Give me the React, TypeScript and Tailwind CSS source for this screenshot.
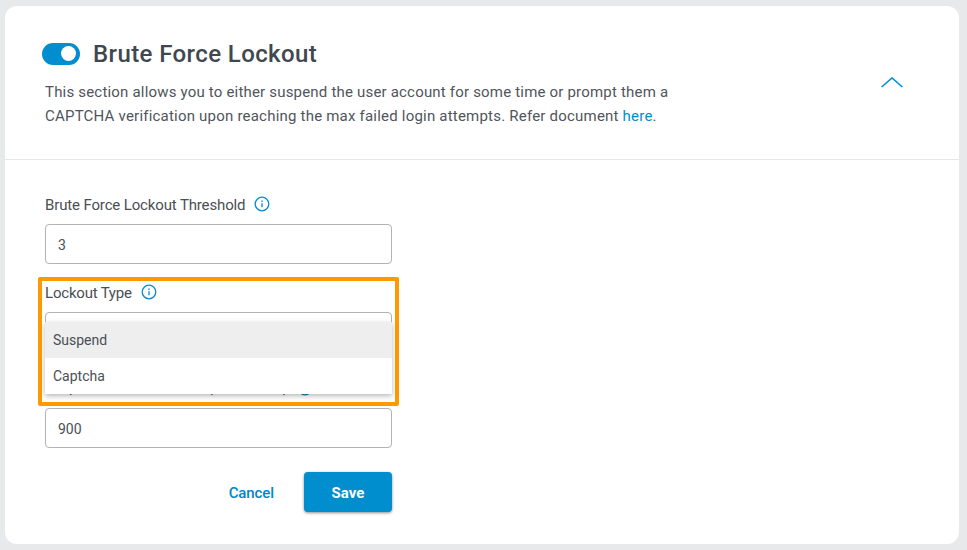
import type { ReactNode } from "react";

function InfoIcon() {
  return (
    <svg width="16" height="16" viewBox="0 0 16 16" fill="none" className="shrink-0">
      <circle cx="8" cy="8" r="6.8" stroke="#008ecf" strokeWidth="1.3" />
      <path d="M8 7.2v4M8 4.6v1.3" stroke="#008ecf" strokeWidth="1.3" />
    </svg>
  );
}

function Label({ children, className, iconClass = "pt-px" }: { children: ReactNode; className: string; iconClass?: string }) {
  return (
    <div className="flex h-5 items-start gap-[9px]">
      <span className={`whitespace-nowrap text-[15px] ${className}`}>{children}</span>
      <span className={iconClass}><InfoIcon /></span>
    </div>
  );
}

function Field({ value }: { value: string }) {
  return (
    <div className="flex h-10 w-[347px] items-center rounded-[4px] border border-[#b3b3b3] bg-white px-3 pt-px text-sm text-[#4a4f55]">
      {value}
    </div>
  );
}

export default function App() {
  return (
    <div className="h-[550px] w-[967px] bg-[#e8e9eb] pl-[5px] pt-1.5 font-['Roboto',sans-serif] text-[#4a4f55]">
      <section className="h-[538px] w-[954px] rounded-xl bg-white">
        <header className="flex h-[154px] items-center justify-between border-b border-[#e6e7e9] pl-[37px] pr-14">
          <div className="h-[120px] pt-[15px]">
            <div className="flex h-8 items-center gap-[13px]">
              <div className="flex h-[22px] w-[38px] items-center justify-end rounded-full bg-[#008ecf] pr-1">
                <div className="size-[15px] rounded-full bg-white" />
              </div>
              <h1 className="whitespace-nowrap text-2xl font-medium tracking-[0.4px] text-[#40474f]">Brute Force Lockout</h1>
            </div>
            <p className="mt-[10px] whitespace-nowrap pl-[3px] text-[15px] leading-6 text-[#50555b]">
              <span className="block tracking-[0.19px]">This section allows you to either suspend the user account for some time or prompt them a</span>
              <span className="block tracking-[0.21px]">
                CAPTCHA verification upon reaching the max failed login attempts. Refer document <a className="text-[#008ecf]">here</a>.
              </span>
            </p>
          </div>
          <svg width="22" height="11" viewBox="0 0 22 11" fill="none">
            <path d="M.6 10 11 1l10.400 9" stroke="#008ecf" strokeWidth="1.6" />
          </svg>
        </header>
        <div className="w-[387px] pl-10 pt-[35px]">
          <Label className="leading-5 tracking-[-0.14px]">Brute Force Lockout Threshold</Label>
          <div className="pt-[9px]"><Field value="3" /></div>
          <div className="relative mt-[19px]">
            <Label className="leading-5 tracking-[-0.2px]">Lockout Type</Label>
            <div className="pt-[9px]"><Field value="" /></div>
            <div className="absolute -left-[7px] -top-[6px] h-[129px] w-[361px] rounded-[2px] border-4 border-[#ff9900]" />
            <ul className="absolute left-0 top-[39px] z-10 w-[347px] bg-white text-sm shadow-[0_2px_5px_rgba(0,0,0,0.28)]">
              <li className="flex h-9 items-center bg-[#eeeeee] px-2">Suspend</li>
              <li className="flex h-9 items-center px-2">Captcha</li>
            </ul>
          </div>
          <div className="mt-[26px]">
            <Label className="leading-[18px] tracking-[-0.31px]" iconClass="pt-0.5">Suspend Effective Period (in Seconds)</Label>
            <div className="pt-[10px]"><Field value="900" /></div>
          </div>
          <div className="mt-6 flex justify-end gap-[30px]">
            <button className="h-10 pt-0.5 text-[15px] font-medium tracking-[-0.1px] text-[#0086c9]">Cancel</button>
            <button className="h-10 w-[88px] rounded-[4px] bg-[#008ecf] pt-0.5 text-[15px] font-bold text-white shadow-[0_1px_3px_rgba(0,0,0,0.45)]">Save</button>
          </div>
        </div>
      </section>
    </div>
  );
}
